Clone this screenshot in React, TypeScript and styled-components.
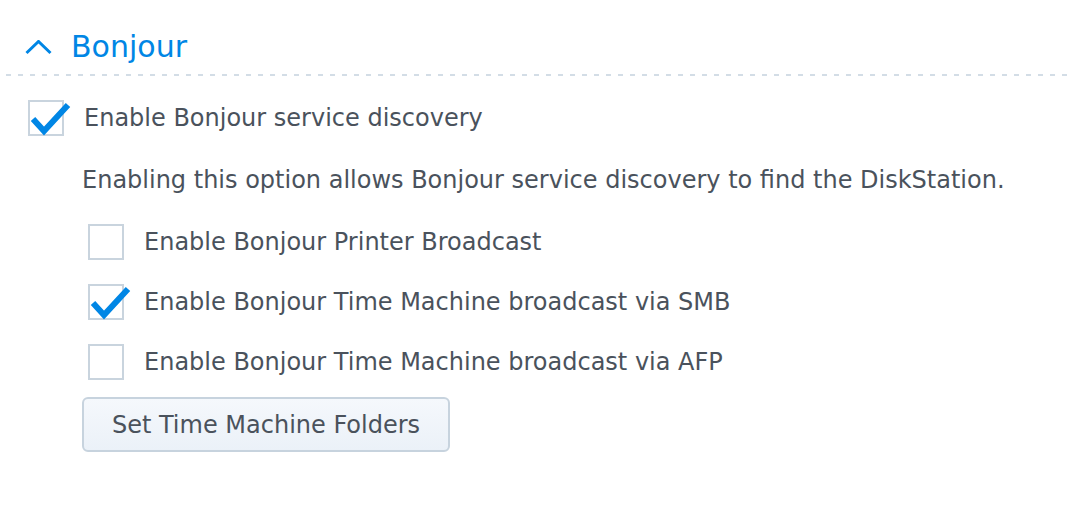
import React from 'react';
import styled, { createGlobalStyle } from 'styled-components';

const GlobalStyle = createGlobalStyle`
    html, body {
        margin: 0;
        padding: 0;
        background: #ffffff;
    }
    body {
        font-family: "DejaVu Sans", Verdana, sans-serif;
        color: #4a525c;
    }
`;

const Section = styled.section`
    width: 1072px;
    padding-left: 6px;
    box-sizing: border-box;
`;

const Header = styled.div`
    display: flex;
    align-items: center;
    gap: 19px;
    height: 38px;
    padding: 28px 0 8px 19px;
`;

const Chevron = styled.svg`
    width: 27px;
    height: 15px;
    flex: none;
`;

const Title = styled.h2`
    margin: 0;
    font-size: 30px;
    font-weight: normal;
    line-height: 38px;
    color: #0086e5;
`;

const Divider = styled.div`
    height: 2px;
    background-image: linear-gradient(to right, #d3dde6 5px, transparent 5px);
    background-size: 12px 2px;
    background-repeat: repeat-x;
`;

const Body = styled.div`
    display: flex;
    flex-direction: column;
    padding: 24px 0 0 22px;
`;

const Row = styled.label<{ $indent?: number }>`
    display: flex;
    align-items: center;
    gap: 20px;
    height: 36px;
    margin-left: ${(p) => p.$indent ?? 0}px;
    font-size: 24px;
    line-height: 36px;
    cursor: pointer;
`;

const Box = styled.span`
    position: relative;
    display: block;
    width: 36px;
    height: 36px;
    flex: none;
    box-sizing: border-box;
    border: 2px solid #c9d4de;
    background: #ffffff;
`;

const Tick = styled.svg`
    position: absolute;
    left: 2px;
    top: 2px;
    width: 40px;
    height: 32px;
    overflow: visible;
`;

const Description = styled.p`
    margin: 29px 0 0 54px;
    font-size: 24px;
    line-height: 30px;
`;

const SubList = styled.div`
    display: flex;
    flex-direction: column;
    gap: 24px;
    margin-top: 29px;
`;

const Button = styled.button`
    align-self: flex-start;
    margin: 17px 0 0 54px;
    width: 368px;
    height: 55px;
    box-sizing: border-box;
    border: 2px solid #c7d3de;
    border-radius: 6px;
    background: linear-gradient(to bottom, #f5f8fc, #ebf1f8);
    font-family: "DejaVu Sans", Verdana, sans-serif;
    font-size: 24px;
    color: #4a525c;
    cursor: pointer;
`;

const Checkbox: React.FC<{ checked?: boolean }> = ({ checked }) => (
    <Box>
        {checked && (
            <Tick viewBox="0 0 40 32">
                <path d="M1 15 L12 27 L36 1" fill="none" stroke="#0086e5" strokeWidth="6" strokeLinejoin="miter" />
            </Tick>
        )}
    </Box>
);

const App: React.FC = () => {
    return (
        <>
            <GlobalStyle />
            <Section>
                <Header>
                    <Chevron viewBox="0 0 27 15">
                        <polyline points="1.5,13 13.5,1.5 25.5,13" fill="none" stroke="#0086e5" strokeWidth="3" />
                    </Chevron>
                    <Title>Bonjour</Title>
                </Header>
                <Divider />
                <Body>
                    <Row>
                        <Checkbox checked />
                        Enable Bonjour service discovery
                    </Row>
                    <Description>
                        Enabling this option allows Bonjour service discovery to find the DiskStation.
                    </Description>
                    <SubList>
                        <Row $indent={60}>
                            <Checkbox />
                            Enable Bonjour Printer Broadcast
                        </Row>
                        <Row $indent={60}>
                            <Checkbox checked />
                            Enable Bonjour Time Machine broadcast via SMB
                        </Row>
                        <Row $indent={60}>
                            <Checkbox />
                            Enable Bonjour Time Machine broadcast via AFP
                        </Row>
                    </SubList>
                    <Button>Set Time Machine Folders</Button>
                </Body>
            </Section>
        </>
    );
};

export default App;
